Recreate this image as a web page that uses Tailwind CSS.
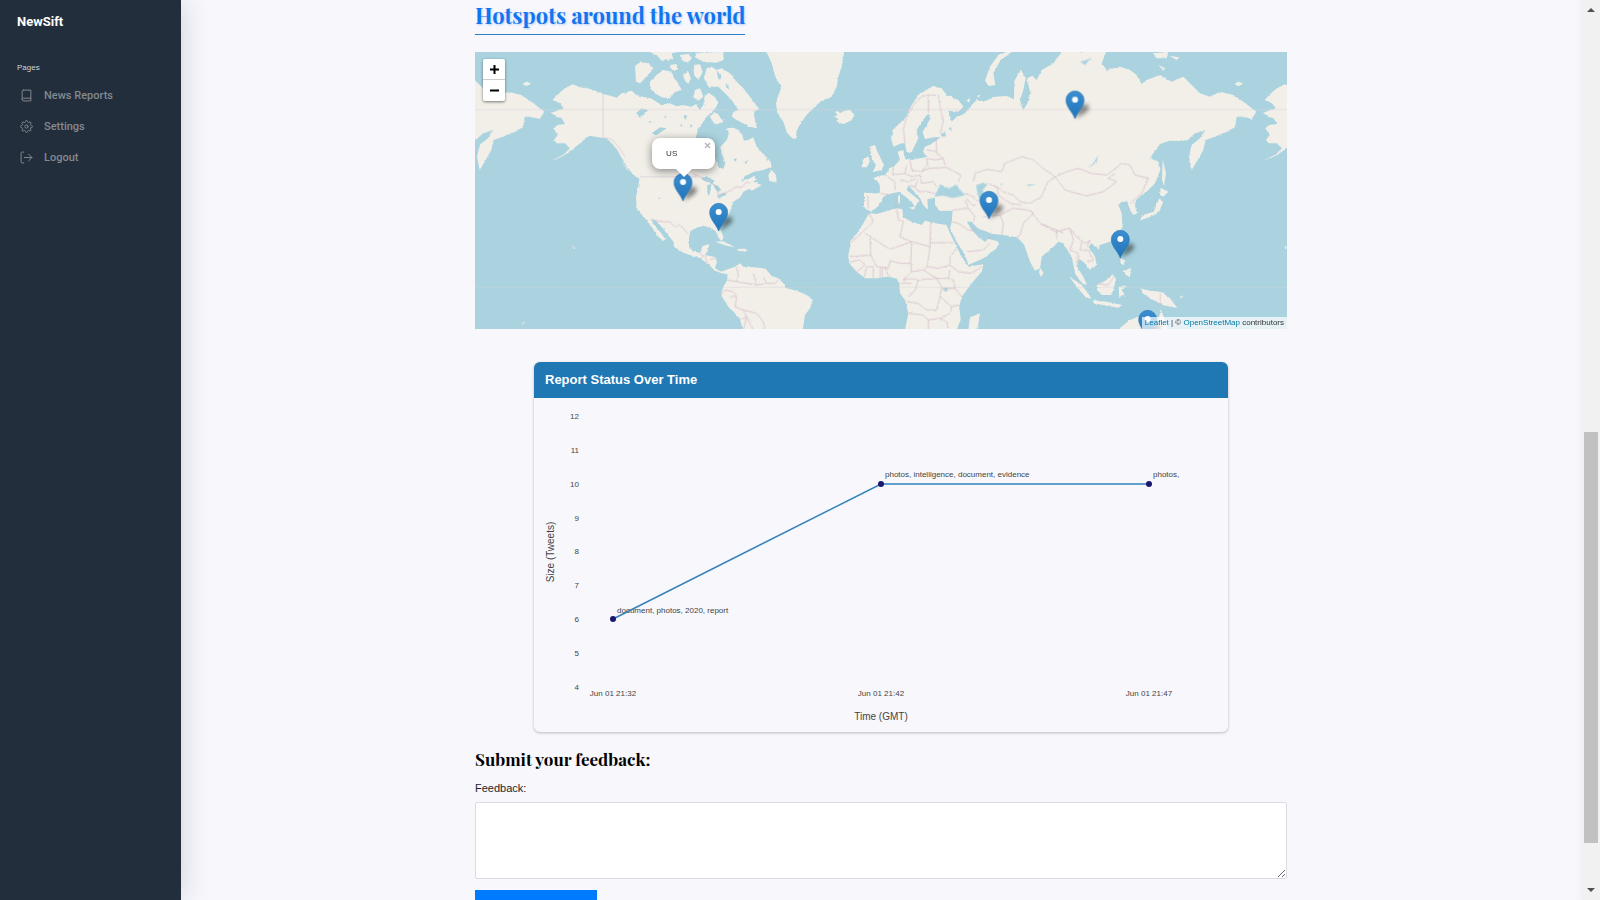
<!DOCTYPE html>
<html lang="en">
<head>
<meta charset="utf-8">
<meta name="viewport" content="width=device-width, initial-scale=1">
<title>NewSift</title>
<script src="https://cdn.jsdelivr.net/npm/@tailwindcss/browser@4"></script>
</head>
<body class="flex h-screen overflow-hidden bg-[#f7f7fc] font-['Liberation_Sans',sans-serif] text-[#212529]">

<aside class="z-10 w-[181px] shrink-0 bg-[#222e3c] px-[17px] pt-3 shadow-[0_0_28px_rgba(34,46,60,0.18)]">
  <a href="#" class="block font-[Roboto,sans-serif] text-[13px] leading-5 font-bold text-white">NewSift</a>
  <h2 class="mt-7 text-[8px] leading-4 text-[#ced4da]">Pages</h2>
  <nav class="mt-3 flex flex-col gap-4 font-[Roboto,sans-serif] text-[11px] leading-[15px] font-medium text-[#84898f]">
    <a href="#" class="flex h-[15px] items-center gap-[11px] pl-[3px]">
      <svg class="size-[13px]" viewBox="0 0 24 24" fill="none" stroke="currentColor" stroke-width="1.8" stroke-linecap="round" stroke-linejoin="round"><path d="M4 19.5A2.5 2.5 0 0 1 6.5 17H20"/><path d="M6.5 2H20v20H6.500A2.500 2.500 0 0 1 4 19.500v-15A2.500 2.500 0 0 1 6.500 2z"/></svg>
      News Reports</a>
    <a href="#" class="flex h-[15px] items-center gap-[11px] pl-[3px]">
      <svg class="size-[13px]" viewBox="0 0 24 24" fill="none" stroke="currentColor" stroke-width="1.8" stroke-linecap="round" stroke-linejoin="round"><circle cx="12" cy="12" r="3"/><path d="M19.4 15a1.65 1.65 0 0 0 .33 1.82l.06.06a2 2 0 0 1-2.83 2.83l-.06-.06a1.65 1.65 0 0 0-2.8 1.17V21a2 2 0 0 1-4 0v-.09A1.65 1.65 0 0 0 9 19.4a1.65 1.65 0 0 0-1.82.33l-.06.06a2 2 0 0 1-2.83-2.83l.06-.06a1.65 1.65 0 0 0-1.170-2.800H3a2 2 0 0 1 0-4h.09A1.65 1.65 0 0 0 4.600 9a1.65 1.65 0 0 0-.33-1.82l-.06-.06a2 2 0 0 1 2.830-2.830l.06.06a1.65 1.65 0 0 0 1.820.33H9a1.65 1.65 0 0 0 1-1.510V3a2 2 0 0 1 4 0v.09a1.65 1.65 0 0 0 1 1.510 1.65 1.65 0 0 0 1.820-.33l.06-.06a2 2 0 0 1 2.830 2.830l-.06.06a1.65 1.65 0 0 0-.33 1.820V9a1.65 1.65 0 0 0 1.510 1H21a2 2 0 0 1 0 4h-.09a1.65 1.65 0 0 0-1.510 1z"/></svg>
      Settings</a>
    <a href="#" class="flex h-[15px] items-center gap-[11px] pl-[3px]">
      <svg class="size-[13px]" viewBox="0 0 24 24" fill="none" stroke="currentColor" stroke-width="1.8" stroke-linecap="round" stroke-linejoin="round"><path d="M7 22H4a2 2 0 0 1-2-2V4a2 2 0 0 1 2-2h3"/><path d="M16 18l6-6-6-6M22 12H8"/></svg>
      Logout</a>
  </nav>
</aside>

<main class="min-w-0 flex-1 overflow-hidden px-6">
  <div class="mx-auto max-w-[812px]">
    <h1 class="inline-block border-b border-[#2a7fc9] pb-1 font-['Playfair_Display','Liberation_Serif',serif] text-[22px] leading-[30px] font-bold whitespace-nowrap text-[#1275f0] [text-shadow:1px_1px_2px_rgba(18,117,240,0.3)]">Hotspots around the world</h1>

    <section aria-label="Hotspot map" class="relative mt-[17px] overflow-hidden bg-[#aad3df]">
      <svg class="block w-full" viewBox="0 6 2436 831" role="img" aria-label="World map">
        <defs>
          <filter id="coast" x="-5%" y="-5%" width="110%" height="110%"><feTurbulence type="fractalNoise" baseFrequency="0.12" numOctaves="3" seed="4"/><feDisplacementMap in="SourceGraphic" scale="7" xChannelSelector="R" yChannelSelector="G"/></filter>
          <linearGradient id="pinfill" x1="0" y1="0" x2="0" y2="1"><stop offset="0" stop-color="#3d8fd0"/><stop offset="1" stop-color="#1f74b8"/></linearGradient>
          <filter id="soft" x="-60%" y="-60%" width="220%" height="220%"><feGaussianBlur stdDeviation="6"/></filter>
          <g id="pin">
            <path d="M2 -1L14 -36Q26 -48 40 -40Q46 -30 30 -17Z" fill="#000" fill-opacity=".45" filter="url(#soft)"/>
            <path d="M0 0C-6 -18 -27 -34 -27 -56A27 27 0 0 1 27 -56C27 -34 6 -18 0 0Z" fill="url(#pinfill)" stroke="#2b78b5" stroke-width="2"/>
            <circle cy="-57" r="9" fill="#fff"/>
          </g>
          <g id="america" transform="translate(-15 0)">
            <path d="M308 103L330 112L365 118L398 132L425 138L440 143L455 130L485 122L500 136L520 140L545 146L560 156L575 166L600 160L620 169L640 165L665 171L678 162L690 180L700 165L705 135L718 130L735 142L745 160L735 176L722 190L710 200L700 215L685 235L678 262L680 285L705 305L735 325L745 350L760 357L766 340L755 310L752 290L770 270L778 250L770 235L790 233L805 240L815 252L822 272L835 270L850 262L860 290L882 315L902 335L905 350L880 360L850 366L825 378L813 394L835 386L850 380L862 386L850 395L875 405L845 422L838 416L820 425L812 440L798 450L788 457L785 475L775 495L755 515L745 530L755 545L761 565L753 573L744 560L738 545L725 535L700 527L685 531L665 540L657 560L657 590L670 605L690 608L698 588L718 582L712 605L705 615L738 622L740 640L735 655L755 665L775 657L795 650L810 640L820 650L850 652L885 655L905 678L925 685L940 700L950 715L980 722L1010 735L1028 750L1020 775L1005 795L998 840L820 840L810 810L795 790L775 770L753 735L760 710L772 690L772 672L755 670L735 662L715 642L700 632L690 624L670 619L640 608L612 590L610 575L590 550L562 515L543 508L548 520L570 545L586 568L580 573L560 555L545 530L530 510L518 497L500 475L498 440L505 410L508 386L490 375L475 355L460 335L448 310L435 290L410 265L385 262L360 257L345 265L335 277L320 288L300 305L278 319L240 334L280 314L300 295L285 280L260 280L252 270L263 255L250 235L262 225L285 222L275 205L258 200L244 188L265 180L281 175L270 160L248 150L265 132L285 115Z"/>
            <path d="M495 48L510 37L535 40L550 55L535 75L510 100L498 95ZM540 95L560 75L580 60L605 65L612 85L622 95L635 120L615 125L600 145L575 142L555 130L540 115ZM640 72L655 65L663 85L655 102L642 90ZM672 45L690 43L698 65L685 90L672 75ZM675 120L690 115L700 140L685 152L670 142ZM710 55L725 50L740 60L755 55L780 70L800 95L820 115L840 140L868 178L850 185L860 235L840 230L800 210L785 200L790 185L805 180L785 150L765 130L745 110L715 110L702 85ZM720 200L735 185L750 200L760 215L735 225ZM540 6L560 15L575 32L610 28L605 10L625 6ZM630 15L655 12L665 25L655 38L635 32ZM680 8L760 6L760 30L740 38L700 35L675 22ZM600 45L620 42L622 60L606 60ZM890 6L905 40L910 60L920 90L935 110L925 135L918 160L922 190L940 215L950 245L965 265L978 266L980 240L995 215L1010 195L1040 165L1055 152L1085 140L1100 110L1105 80L1115 50L1122 6ZM1093 185L1105 184L1110 190L1122 183L1140 180L1153 195L1145 210L1122 222L1098 215L1106 206L1092 200L1104 195ZM895 375L905 360L918 375L920 398L898 392ZM735 575L760 574L795 592L772 588ZM800 597L825 596L835 603L808 604ZM160 101L172 95L182 101L170 108Z"/>
            <path d="M306 589L315 592L312 597ZM155 822L165 812L160 824ZM20 748L28 752ZM448 282L465 300L465 320ZM455 335L480 365L470 358Z"/>
          </g>
          <g id="eurasia" transform="translate(1095 0)">
            <path d="M72 428L100 430L120 428L119 402L100 385L115 378L135 375L150 355L165 345L180 330L173 305L190 300L193 325L215 330L240 325L262 320L249 305L255 290L275 282L302 262L280 262L255 268L248 245L272 205L262 193L245 215L230 240L235 265L215 307L200 307L195 280L185 280L160 290L153 265L158 240L195 205L215 165L240 130L280 108L305 115L320 135L355 150L370 170L355 185L325 182L335 215L350 200L375 190L395 165L410 150L430 155L465 140L500 138L522 148L523 92L543 60L557 85L550 120L540 150L550 180L562 160L572 130L560 90L575 75L590 90L605 60L640 40L665 6L798 6L785 40L800 60L840 50L870 60L890 75L905 102L920 90L960 75L995 95L1030 80L1055 105L1080 130L1110 140L1140 125L1180 135L1210 155L1249 185L1235 207L1210 200L1190 200L1185 232L1160 245L1120 262L1097 270L1090 300L1070 335L1055 360L1047 320L1055 285L1080 265L1096 240L1065 250L1040 273L990 272L960 281L940 310L930 325L955 335L961 360L945 400L920 425L905 435L888 450L885 468L891 490L880 495L870 480L862 455L845 455L835 465L845 490L848 530L830 560L810 575L780 585L765 590L755 580L745 590L765 620L770 645L750 660L735 640L715 625L711 650L730 680L741 705L725 700L705 670L695 620L685 605L670 580L655 575L640 590L605 620L600 655L585 662L570 635L558 600L550 580L530 562L490 555L455 551L430 541L415 537L395 515L380 515L400 545L415 562L435 575L447 567L478 575L470 595L430 625L385 645L375 615L350 575L330 535L335 515L338 482L300 483L285 465L285 443L262 448L264 480L250 465L240 445L225 427L205 407L200 420L237 450L225 472L215 455L190 435L180 425L155 430L130 440L118 465L95 485L78 478L72 470Z"/>
            <path d="M88 490L110 492L170 475L188 478L188 500L215 515L245 525L255 512L285 520L320 525L330 550L350 590L365 620L385 650L430 643L425 665L395 700L365 740L358 770L362 810L350 840L195 840L205 790L195 750L180 730L178 700L170 685L140 680L110 685L75 685L50 665L28 640L25 615L30 590L30 575L65 530L75 510Z"/>
            <path d="M435 92L450 50L475 15L500 6L517 6L482 30L460 70L466 105L446 108ZM90 290L105 285L112 305L122 325L132 345L125 360L98 366L108 345L95 325ZM68 330L85 318L90 335L80 352L65 352ZM600 653L611 670L603 680L597 668ZM390 802L420 790L412 840L385 840ZM174 438L180 434L180 460L174 460ZM205 472L225 470L222 480ZM378 150L390 145L388 158ZM410 138L420 134L420 145Z"/>
            <path d="M899 512L910 495L940 485L950 465L958 443L969 458L957 487L930 500ZM962 413L985 425L970 440L960 435ZM968 330L978 370L972 407L966 390ZM688 680L725 705L755 745L740 745L715 717ZM755 750L800 755L846 765L835 773L760 760ZM770 705L800 690L818 673L828 690L815 735L785 735L772 720ZM836 710L862 708L845 718L856 740L845 735L838 745ZM899 715L930 722L965 726L990 745L1012 774L970 766L940 750L915 735ZM840 625L856 630L850 645L842 640ZM850 662L873 654L870 680L858 676ZM835 838L870 810L900 798L920 800L935 838ZM962 778L975 810L982 838L950 838ZM768 588L780 586L776 600ZM940 10L985 6L980 25L950 25ZM988 18L1018 22L1010 30ZM955 45L975 55L970 62ZM1184 102L1195 95L1206 102L1194 108ZM1020 742L1032 735L1022 748Z"/>
          </g>
          <g id="lakes" transform="translate(1095 0)">
            <path d="M283 440L300 403L328 415L348 404L375 436L340 444L310 437ZM408 407L428 398L442 404L428 420L440 455L452 470L448 484L430 480L418 455ZM310 715L325 712L322 725L312 723ZM742 355L760 340L774 315L770 338ZM303 250L316 247L318 260L305 260ZM325 235L333 232L336 245ZM560 404L592 402L565 408ZM480 400L488 402L484 406ZM720 35L735 45L755 22L740 30Z"/>
          </g>
        </defs>
        <g fill="#f2efe9" filter="url(#coast)">
          <use href="#america"/><use href="#eurasia"/>
          <use href="#america" x="2136"/><use href="#eurasia" x="-2136"/>
        </g>
        <g fill="#aad3df" filter="url(#coast)">
          <use href="#lakes"/>
          <path transform="translate(-15 0)" d="M690 385L710 380L735 392L725 402L708 395ZM712 405L724 402L718 438L712 430ZM728 402L745 408L755 422L742 425ZM740 438L765 428L770 434L745 444ZM498 190L515 175L535 180L520 195L510 203ZM545 250L570 232L590 235L560 255ZM625 262L632 290L640 300L630 292ZM565 442L572 445L568 448ZM640 200L650 195L648 210ZM660 222L668 225L662 235ZM630 225L636 222L635 232ZM788 328L800 325L798 335ZM820 335L835 330L828 342ZM740 60L755 80L745 90ZM770 100L780 120L768 112ZM580 200L590 198L586 206ZM535 215L545 212L540 220Z"/>
        </g>
        <g fill="none" stroke="#cfb4c4" stroke-width="2" stroke-linejoin="round">
          <g stroke="#d9d3dc" stroke-width="3"><path d="M0 179H2436M0 713H2436" stroke-opacity=".5"/><path d="M384 132V262L410 268L430 290L450 320M495 380H665"/></g>
          <g filter="url(#coast)">
            <path transform="translate(-15 0)" d="M670 372L705 386L740 410L745 435L775 425L800 410L815 412L830 395L840 400M543 508L575 515L600 515L615 530L630 525L655 553M690 608L700 620L690 628M705 615L712 640M738 622L720 630M772 690L800 695L805 675L800 650M753 735L765 720L790 725L800 740L780 740M800 695L830 700L860 705L850 670M860 705L890 700L880 680M890 700L915 700L925 690M800 740L795 770L820 780L830 800L820 840M820 780L860 790L880 815L885 840M830 800L850 840M810 810L830 800"/>
            <g transform="translate(1095 0)">
              <path d="M82 435L85 475M120 430L150 436M135 375L165 395L165 420M160 345L158 375L195 370L200 345M210 332L215 360L245 365L262 345L260 325M195 370L215 380L240 375L245 400L280 395L290 410M180 390L205 395L230 385M205 407L225 410L235 425L260 425L285 430M225 410L235 390M245 365L265 355L320 352L362 375L355 395M262 325L285 330L310 325L315 345M288 265L290 310L310 325M260 300L290 305M195 280L190 240L200 200L220 165L245 140L265 135L265 190M265 135L295 135L302 180L310 215L300 250M400 395L405 370L440 358L485 365L495 340L545 320L580 330L610 355L645 380L620 400L605 440L570 460L540 455L520 435L490 425L470 410L440 400M470 410L475 435L510 460L545 465M375 430L400 440L415 455M380 445L395 465L410 465M338 480L385 475L405 500L400 515M385 475L375 450M335 515L355 520L385 540L410 540M380 605L430 600L450 580M445 560L455 570M430 500L480 495L490 520L485 555M480 495L520 475L565 480L580 490L550 520L540 555L530 562M570 480L600 520L650 540L650 565M600 520L645 545L690 535L710 560M650 540L670 550M690 535L700 570L690 600L715 610L710 640M710 560L735 580L750 572L740 590M725 575L720 600L745 600L760 630L740 635M645 380L680 365L715 355L755 370L800 375L845 340L870 345L885 375L925 385L905 430L870 460M645 380L675 420L740 438L790 425L830 395L805 385L825 370M775 702L805 705L822 680M961 728V765"/>
              <path d="M88 490L100 515L30 580M75 550L90 560L92 615L30 620M90 560L150 598L215 575L270 590L272 515M190 515L180 560L215 575L212 640L180 640L150 632L145 655L110 650L100 630L92 615M170 475L175 510L190 515M165 475L175 450M272 578H340M270 590L262 650L295 655L330 645L330 620L350 595M330 645L355 665L395 670L425 650M212 640L215 665L190 690M215 665L250 660L262 650M250 660L290 685L325 685L330 660M190 690L215 685L235 690L225 720L205 740M290 685L305 710L300 740L335 770L360 765M235 690L290 685M200 755L235 760L260 780L290 780L300 740M205 790L250 795L265 810L300 805L330 790L335 770M265 810V840M300 805L320 815L325 840M325 685L340 690L345 715L365 740M305 715H345M72 685L80 650L100 650V685M120 650V682M127 650V682M135 650L145 678M30 635L60 630L75 645L50 665M180 700H215"/>
            </g>
          </g>
        </g>
        <use href="#pin" x="624" y="453"/>
        <use href="#pin" x="731" y="543"/>
        <use href="#pin" x="1800" y="206"/>
        <use href="#pin" x="1542" y="507"/>
        <use href="#pin" x="1936" y="624"/>
        <use href="#pin" x="2018" y="864"/>
      </svg>

      <div class="absolute top-[7px] left-2 w-[22px] rounded-xs bg-white shadow-[0_1px_3px_rgba(0,0,0,0.5)]">
        <button type="button" aria-label="Zoom in" class="flex h-[21px] w-full items-center justify-center border-b border-[#ccc]"><svg class="size-[9px]" viewBox="0 0 9 9" stroke="#000" stroke-width="2"><path d="M0 4.500H9M4.500 0V9"/></svg></button>
        <button type="button" aria-label="Zoom out" class="flex h-[21px] w-full items-center justify-center"><svg class="size-[9px]" viewBox="0 0 9 9" stroke="#000" stroke-width="2"><path d="M0 4.500H9"/></svg></button>
      </div>

      <div class="absolute top-[86px] left-[177px] flex h-[31px] w-[63px] items-center rounded-lg bg-white pl-[14px] text-[8px] tracking-wide text-[#333] shadow-[0_2px_9px_rgba(0,0,0,0.45)]">
        US
        <button type="button" aria-label="Close" class="absolute top-1 right-1"><svg class="size-[7px]" viewBox="0 0 7 7" stroke="#b5b5b5" stroke-width="1.400"><path d="M1 1L6 6M6 1L1 6"/></svg></button>
        <svg class="absolute top-[31px] left-6 h-2 w-4" viewBox="0 0 16 8" fill="#fff"><path d="M0 0H16L8 8Z"/></svg>
      </div>

      <p class="absolute right-0 bottom-0 bg-white/70 px-[3px] text-[8px] leading-3 whitespace-nowrap text-[#333]"><a href="#" class="text-[#0078a8]">Leaflet</a> | © <a href="#" class="text-[#0078a8]">OpenStreetMap</a> contributors</p>
    </section>

    <section class="mx-auto mt-[33px] max-w-[694px] overflow-hidden rounded-md shadow-[0_1px_3px_rgba(0,0,0,0.25)]">
      <h2 class="bg-[#1f77b4] px-[11px] text-[13px] leading-9 font-bold text-white">Report Status Over Time</h2>
      <svg class="block w-full font-['Liberation_Sans',sans-serif]" viewBox="0 0 694 334" fill="#444" font-size="8" role="img" aria-label="Report size in tweets over time">
        <g text-anchor="end">
          <text x="45" y="21">12</text><text x="45" y="55">11</text><text x="45" y="89">10</text><text x="45" y="123">9</text><text x="45" y="156">8</text><text x="45" y="190">7</text><text x="45" y="224">6</text><text x="45" y="258">5</text><text x="45" y="292">4</text>
        </g>
        <g text-anchor="middle">
          <text x="79" y="298">Jun 01 21:32</text><text x="347" y="298">Jun 01 21:42</text><text x="615" y="298">Jun 01 21:47</text>
          <text x="347" y="322" font-size="10">Time (GMT)</text>
          <text x="20" y="154" font-size="10" transform="rotate(-90 20 154)">Size (Tweets)</text>
        </g>
        <g><text x="83" y="215">document, photos, 2020, report</text><text x="351" y="79">photos, intelligence, document, evidence</text><text x="619" y="79">photos,</text></g>
        <path d="M79 221L347 86H615" fill="none" stroke="#3182bd" stroke-width="1.500"/>
        <g fill="#191970"><circle cx="79" cy="221" r="3"/><circle cx="347" cy="86" r="3"/><circle cx="615" cy="86" r="3"/></g>
      </svg>
    </section>

    <form>
      <h2 class="mt-[15px] font-['Playfair_Display','Liberation_Serif',serif] text-[17px] leading-6 font-bold text-black">Submit your feedback:</h2>
      <label for="feedback" class="mt-[9px] block text-[11px] leading-4">Feedback:</label>
      <textarea id="feedback" class="mt-[6px] block h-[77px] w-full resize rounded-xs border border-[#d9dce3] bg-white p-2 text-xs"></textarea>
      <button type="submit" aria-label="Submit" class="mt-[11px] block h-8 w-[122px] bg-[#007bff]"></button>
    </form>
  </div>
</main>

<div aria-hidden="true" class="flex w-[19px] shrink-0 flex-col items-center bg-[#f1f1f1] py-2 shadow-[0_0_8px_rgba(0,0,0,0.05)]">
  <svg class="h-1 w-2" viewBox="0 0 8 4" fill="#505050"><path d="M0 4L4 0L8 4Z"/></svg>
  <div class="grow-[420]"></div>
  <div class="w-[14px] grow-[411] bg-[#c1c1c1]"></div>
  <div class="grow-[45]"></div>
  <svg class="h-1 w-2" viewBox="0 0 8 4" fill="#505050"><path d="M0 0L4 4L8 0Z"/></svg>
</div>
</body>
</html>
